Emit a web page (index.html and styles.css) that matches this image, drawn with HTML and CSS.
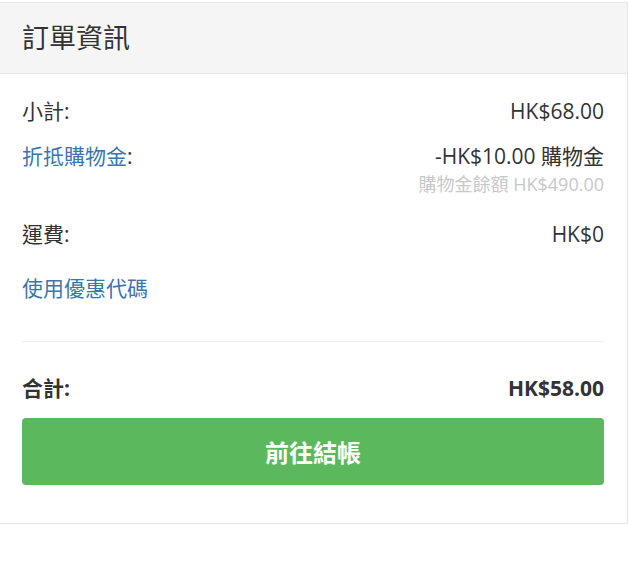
FILE: index.html
```html
<!DOCTYPE html>
<html lang="zh-Hant">
<head>
<meta charset="utf-8">
<title>訂單資訊</title>
<link rel="stylesheet" href="styles.css">
</head>
<body>
<div class="panel">
  <div class="panel-heading">
    <h3 class="panel-title">訂單資訊</h3>
  </div>
  <div class="panel-body">
    <div class="row">
      <span class="label">小計:</span>
      <span class="value">HK$68.00</span>
    </div>
    <div class="row row-credit">
      <span class="label"><a class="link" href="#">折抵購物金</a>:</span>
      <div class="value">
        <div>-HK$10.00 購物金</div>
        <div class="balance">購物金餘額 HK$490.00</div>
      </div>
    </div>
    <div class="row row-shipping">
      <span class="label">運費:</span>
      <span class="value">HK$0</span>
    </div>
    <div class="row row-coupon">
      <a class="link" href="#">使用優惠代碼</a>
    </div>
    <hr class="divider">
    <div class="row row-total">
      <span class="label">合計:</span>
      <span class="value">HK$58.00</span>
    </div>
    <button class="btn-checkout" type="button">前往結帳</button>
  </div>
</div>
</body>
</html>
```
FILE: styles.css
```css
html, body {
  margin: 0;
  padding: 0;
  background: #fff;
}
body {
  padding-top: 2px;
  font-family: "Open Sans", "Noto Sans CJK TC", sans-serif;
  color: #333;
  font-size: 21px;
  line-height: 30px;
}
.panel {
  width: 628px;
  border: 1px solid #e6e6e6;
  border-left: 0;
  box-sizing: border-box;
  background: #fff;
}
.panel-heading {
  height: 70px;
  background: #f5f5f5;
  border-bottom: 1px solid #e6e6e6;
  display: flex;
  align-items: center;
  padding: 0 22px;
}
.panel-title {
  margin: 0;
  font-size: 27px;
  font-weight: normal;
  color: #333;
  line-height: 1.2;
}
.panel-body {
  padding: 22px 23px 38px 22px;
}
.row {
  display: flex;
  justify-content: space-between;
  align-items: flex-start;
}
.row-credit {
  margin-top: 15px;
}
.row-shipping {
  margin-top: 22px;
}
.row-coupon {
  margin-top: 24px;
}
.value {
  text-align: right;
}
.balance {
  color: #c8c8c8;
  font-size: 18px;
  line-height: 26px;
}
.link {
  color: #3a76ad;
  text-decoration: none;
}
.divider {
  border: 0;
  border-top: 1px solid #eee;
  margin: 38px 0 31px;
}
.row-total {
  font-weight: bold;
}
.btn-checkout {
  display: block;
  width: 100%;
  height: 67px;
  margin-top: 15px;
  border: 0;
  border-radius: 4px;
  background: #5cb85c;
  color: #fff;
  font-family: "Open Sans", "Noto Sans CJK TC", sans-serif;
  font-size: 24px;
  font-weight: bold;
  cursor: pointer;
}
```
